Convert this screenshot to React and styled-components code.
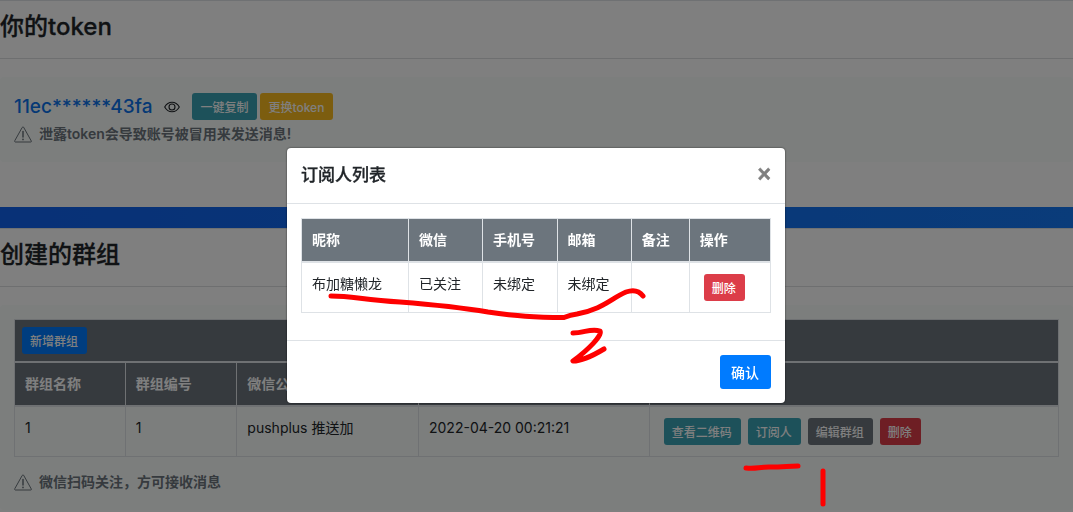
import React from "react";
import styled, { createGlobalStyle } from "styled-components";

const GlobalStyle = createGlobalStyle`
  *, *::before, *::after { box-sizing: border-box; }
  body {
    margin: 0;
    overflow: hidden;
    background: #fff;
    color: #212529;
    font: 400 14px/22px Inter, "Noto Sans CJK SC", sans-serif;
  }
`;

const tones = {
  primary: "#007bff",
  info: "#3aa2b4",
  warning: "#f9bb1f",
  secondary: "#6c757d",
  danger: "#dc3d49",
};

const Page = styled.main`
  border-top: 1px solid #dee2e6;
`;

const SectionHead = styled.header`
  padding: 11px 0 16px;
  border-bottom: 1px solid #dcdee0;
`;

const SectionTitle = styled.h2`
  margin: 0;
  font-size: 24px;
  font-weight: 500;
  line-height: 30px;
  -webkit-text-stroke: 0.3px currentColor;
`;

const Panel = styled.section`
  margin-top: 18px;
  padding: 14px;
  border-radius: 4px;
  background: #f8fcfa;
`;

const Band = styled.div`
  height: 22px;
  margin-top: 45px;
  border-bottom: 1px solid #dee2e6;
  background: linear-gradient(90deg, #1062ee, #1478f4);
`;

const TokenRow = styled.div`
  display: flex;
  align-items: center;
  padding-top: 2px;
`;

const Token = styled.span`
  margin-right: 12px;
  color: #0b72ea;
  font-size: 19px;
  font-weight: 500;
`;

const IconButton = styled.button`
  display: flex;
  margin-right: 12px;
  padding: 0;
  border: 0;
  background: none;
  color: #212529;
`;

const Button = styled.button`
  padding: ${(p) => (p.$large ? "0 12px 0 11px" : "0 9px 0 8px")};
  height: ${(p) => (p.$large ? 34 : 27)}px;
  border: 0;
  border-radius: 3px;
  background: ${(p) => tones[p.$tone]};
  color: #fff;
  font-family: inherit;
  font-size: ${(p) => (p.$large ? 14 : 12)}px;
  font-weight: 500;
  white-space: nowrap;
`;

const ButtonGroup = styled.div`
  position: relative;
  display: flex;
  gap: ${(p) => p.$gap}px;
  padding: ${(p) => (p.$inCell ? "1px 4px" : 0)};
`;

const Notice = styled.p`
  display: flex;
  align-items: center;
  gap: 7px;
  height: 28px;
  margin: ${(p) => p.$top || 0}px 0 0;
  color: #6c757d;
  font-weight: 600;
`;

const Table = styled.table`
  width: 100%;
  border-collapse: collapse;
  table-layout: fixed;
  border: 1px solid #dee2e6;
`;

const Col = styled.col`
  width: ${(p) => p.$share}%;
`;

const HeadCell = styled.th`
  padding: ${(p) => (p.$toolbar ? "7px" : "10px")};
  border: 1px solid #dee2e6;
  border-bottom-width: 2px;
  background: #6c757d;
  color: #fff;
  font-weight: 700;
  text-align: left;
`;

const Cell = styled.td`
  padding: 10px;
  border: 1px solid #dee2e6;
  vertical-align: top;
`;

const Backdrop = styled.div`
  position: fixed;
  inset: 0;
  z-index: 10;
  padding: 148px 17px 0 16px;
  background: rgba(0, 0, 0, 0.5);
`;

const Dialog = styled.div`
  position: relative;
  max-width: 498px;
  margin: 0 auto;
  border-radius: 4px;
  background: #fff;
  box-shadow: 0 0 2px rgba(0, 0, 0, 0.7);
`;

const DialogHead = styled.header`
  display: flex;
  align-items: center;
  justify-content: space-between;
  padding: 14px;
  border-bottom: 1px solid #dee2e6;
`;

const DialogTitle = styled.h5`
  margin: 0;
  font-size: 17px;
  font-weight: 500;
  line-height: 27px;
  -webkit-text-stroke: 0.3px currentColor;
`;

const CloseButton = styled.button`
  padding: 0 0 3px;
  border: 0;
  background: none;
  color: #7f7f7f;
  font: 700 23px/24px "Liberation Sans", sans-serif;
  -webkit-text-stroke: 0.5px currentColor;
`;

const DialogBody = styled.div`
  padding: 14px 14px 27px;
`;

const DialogFoot = styled.footer`
  display: flex;
  justify-content: flex-end;
  padding: 14px;
  border-top: 1px solid #dee2e6;
`;

const Marks = styled.svg`
  position: absolute;
  top: 0;
  left: 0;
  z-index: 20;
  overflow: visible;
  pointer-events: none;
  fill: none;
  stroke: #fe0000;
  stroke-width: 5px;
  stroke-linecap: round;
  stroke-linejoin: round;
`;

function EyeIcon() {
  return (
    <svg width="16" height="14" viewBox="0 0 16 14" fill="none" stroke="currentColor" strokeWidth="1.1" aria-hidden="true">
      <path d="M.7 7C4.2.6 11.8.6 15.3 7C11.8 13.4 4.2 13.4.7 7Z" />
      <circle cx="8" cy="7" r="3" />
    </svg>
  );
}

function WarningIcon() {
  return (
    <svg width="18" height="17" viewBox="0 0 18 17" fill="none" stroke="currentColor" strokeLinejoin="round" strokeLinecap="round" aria-hidden="true">
      <path d="M8.4 1.2Q9 .4 9.6 1.2L17.3 15Q17.6 16 16.7 16H1.3Q.4 16 .7 15Z" />
      <path d="M9 5.6V11" strokeWidth="1.5" />
      <path d="M9 13.3V13.4" strokeWidth="1.7" />
    </svg>
  );
}

const groupColumns = [
  ["群组名称", 10.6],
  ["群组编号", 10.7],
  ["微信公众号", 17.4],
  ["创建时间", 22.1],
  ["操作", 39.2],
];

const subscriberColumns = [
  ["昵称", 22.8],
  ["微信", 15.8],
  ["手机号", 15.9],
  ["邮箱", 15.8],
  ["备注", 12.4],
  ["操作", 17.3],
];

function Columns({ columns }) {
  return (
    <colgroup>
      {columns.map(([name, share]) => <Col key={name} $share={share} />)}
    </colgroup>
  );
}

function HeadRow({ columns }) {
  return (
    <tr>
      {columns.map(([name]) => <HeadCell key={name} scope="col">{name}</HeadCell>)}
    </tr>
  );
}

function SubscriberDialog() {
  return (
    <Backdrop>
      <Dialog role="dialog" aria-modal="true" aria-labelledby="subscriber-title">
        <DialogHead>
          <DialogTitle id="subscriber-title">订阅人列表</DialogTitle>
          <CloseButton type="button" aria-label="关闭">×</CloseButton>
        </DialogHead>
        <DialogBody>
          <Table>
            <Columns columns={subscriberColumns} />
            <thead><HeadRow columns={subscriberColumns} /></thead>
            <tbody>
              <tr>
                <Cell>布加糖懒龙</Cell>
                <Cell>已关注</Cell>
                <Cell>未绑定</Cell>
                <Cell>未绑定</Cell>
                <Cell />
                <Cell>
                  <ButtonGroup $inCell>
                    <Button type="button" $tone="danger">删除</Button>
                  </ButtonGroup>
                </Cell>
              </tr>
            </tbody>
          </Table>
        </DialogBody>
        <DialogFoot>
          <Button type="button" $tone="primary" $large>确认</Button>
        </DialogFoot>
        <Marks width="498" height="255" viewBox="0 0 498 255" aria-hidden="true">
          <path d="M44 148C66 148 76 152 113 154C151 157 171 159 201 164C230 168 246 169.500 277 169.500Q283 167 290 166C316 161 323 151 339 144Q350 140 356 148" />
          <path d="M286 185C297 185 304 180 313 183C316 187 301 202 286 213Q297 213 317 201" />
        </Marks>
      </Dialog>
    </Backdrop>
  );
}

export default function App() {
  return (
    <>
      <GlobalStyle />
      <Page>
        <SectionHead><SectionTitle>你的token</SectionTitle></SectionHead>
        <Panel>
          <TokenRow>
            <Token>11ec******43fa</Token>
            <IconButton type="button" aria-label="显示token"><EyeIcon /></IconButton>
            <ButtonGroup $gap={3}>
              <Button type="button" $tone="info">一键复制</Button>
              <Button type="button" $tone="warning">更换token</Button>
            </ButtonGroup>
          </TokenRow>
          <Notice><WarningIcon />泄露token会导致账号被冒用来发送消息!</Notice>
        </Panel>
        <Band />
        <SectionHead><SectionTitle>创建的群组</SectionTitle></SectionHead>
        <Panel>
          <Table>
            <Columns columns={groupColumns} />
            <thead>
              <tr>
                <HeadCell colSpan={5} $toolbar>
                  <ButtonGroup>
                    <Button type="button" $tone="primary">新增群组</Button>
                  </ButtonGroup>
                </HeadCell>
              </tr>
              <HeadRow columns={groupColumns} />
            </thead>
            <tbody>
              <tr>
                <Cell>1</Cell>
                <Cell>1</Cell>
                <Cell>pushplus 推送加</Cell>
                <Cell>2022-04-20 00:21:21</Cell>
                <Cell>
                  <ButtonGroup $inCell $gap={7}>
                    <Button type="button" $tone="info">查看二维码</Button>
                    <Button type="button" $tone="info">订阅人</Button>
                    <Button type="button" $tone="secondary">编辑群组</Button>
                    <Button type="button" $tone="danger">删除</Button>
                    <Marks width="180" height="90" viewBox="0 0 180 90" aria-hidden="true">
                      <path d="M86 51C97 52 98 50 109 50C125 50 127 49 138 49" />
                      <path d="M163 54V87" />
                    </Marks>
                  </ButtonGroup>
                </Cell>
              </tr>
            </tbody>
          </Table>
          <Notice $top={11}><WarningIcon />微信扫码关注，方可接收消息</Notice>
        </Panel>
      </Page>
      <SubscriberDialog />
    </>
  );
}
